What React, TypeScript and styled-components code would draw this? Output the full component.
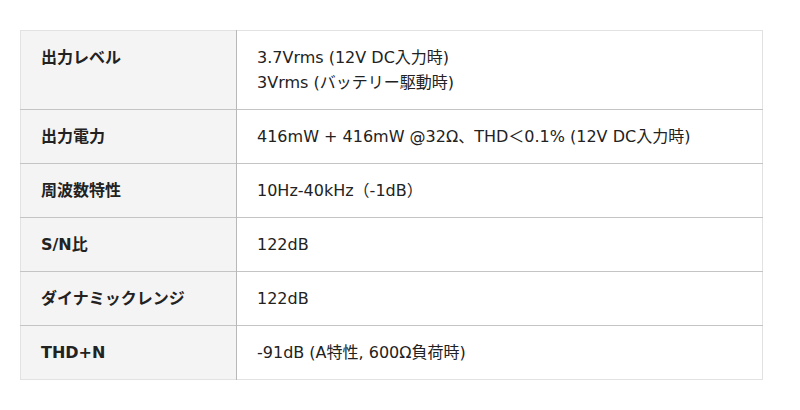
import React, { FC } from "react";
import styled, { createGlobalStyle } from "styled-components";

const GlobalStyle = createGlobalStyle`
  body {
    margin: 0;
    background: #fff;
    font-family: "DejaVu Sans", "Noto Sans CJK JP", sans-serif;
    color: #222;
  }
`;

interface Spec {
  label: string;
  values: string[];
}

const specs: Spec[] = [
  { label: "出力レベル", values: ["3.7Vrms (12V DC入力時)", "3Vrms (バッテリー駆動時)"] },
  { label: "出力電力", values: ["416mW + 416mW @32Ω、THD＜0.1% (12V DC入力時)"] },
  { label: "周波数特性", values: ["10Hz-40kHz（-1dB）"] },
  { label: "S/N比", values: ["122dB"] },
  { label: "ダイナミックレンジ", values: ["122dB"] },
  { label: "THD+N", values: ["-91dB (A特性, 600Ω負荷時)"] },
];

export const SpecTable: FC = () => (
  <Table>
    <tbody>
      {specs.map((s) => (
        <tr key={s.label}>
          <Label>{s.label}</Label>
          <Value>
            {s.values.map((v) => (
              <Line key={v}>{v}</Line>
            ))}
          </Value>
        </tr>
      ))}
    </tbody>
  </Table>
);

const App: FC = () => (
  <>
    <GlobalStyle />
    <Wrapper>
      <SpecTable />
    </Wrapper>
  </>
);

export default App;

const Wrapper = styled.div`
  padding: 30px 38px 30px 20px;
`;

const Table = styled.table`
  width: 743px;
  border-collapse: collapse;
  border: 1px solid #e2e2e2;
  font-size: 16px;
  line-height: 25px;
  tr + tr > * {
    border-top: 1px solid #c4c4c4;
  }
`;

const Label = styled.th`
  width: 175px;
  padding: 14px 20px;
  text-align: left;
  vertical-align: top;
  font-weight: bold;
  background: #f4f4f4;
  border-right: 1px solid #b8b8b8;
`;

const Value = styled.td`
  padding: 14px 20px;
  vertical-align: top;
`;

const Line = styled.div``;
